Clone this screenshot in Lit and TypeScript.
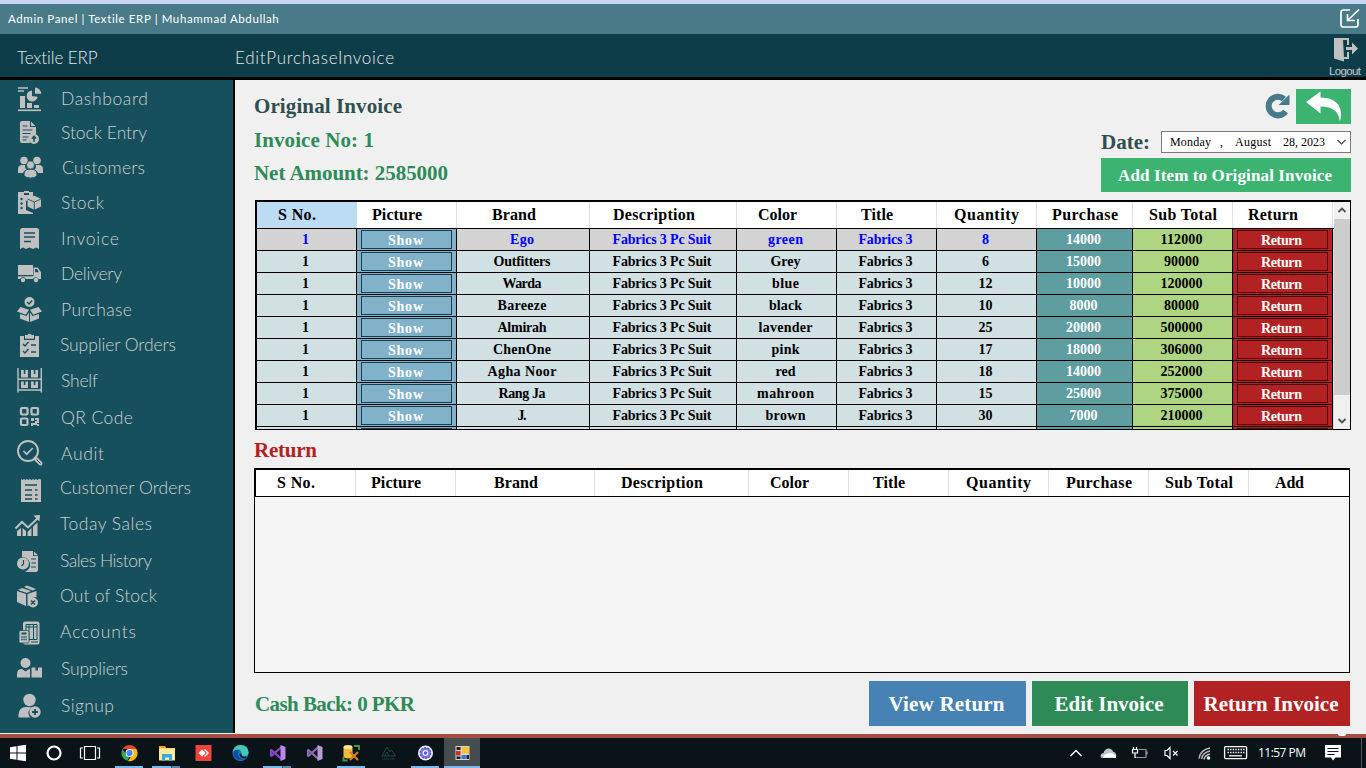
import { LitElement, html, svg, css } from "lit";
import { customElement, property } from "lit/decorators.js";

/** Text tracked out (or in) so that it fills a given width. */
@customElement("fit-text")
class FitText extends LitElement {
  @property({ type: Number }) w = 0;
  @property() text = "";
  static styles = css`
    :host { display: inline-block; white-space: pre; text-align: left; flex: none; }
  `;
  render() {
    return html`<span>${this.text}</span>`;
  }
  updated() {
    const span = this.renderRoot.querySelector("span") as HTMLElement;
    this.style.letterSpacing = "0px";
    const natural = span.getBoundingClientRect().width;
    const gaps = Math.max(1, this.text.length - 1);
    this.style.letterSpacing = this.text.length > 1 ? (this.w - natural) / gaps + "px" : "0px";
    this.style.width = this.w + "px";
  }
}

const fit = (text: string, w: number) => html`<fit-text .text=${text} .w=${w}></fit-text>`;

const B = "#17505d";

// Sidebar glyphs, each on a 30x30 board with its left edge 14px into the sidebar.
const glyph = {
  dashboard: svg`<path d="M4 4h10M4 7h6" stroke="#c0c0c0" stroke-width="1.3"/><path d="M4 26.3h23" stroke="#c0c0c0" stroke-width="1.6"/><path d="M6 12h5v12H6zM13 19h5v5h-5zM20 21h5v3h-5z"/><path d="M18 6.500a5.500 5.500 0 1 0 5.600 6.300L18 12z"/><path d="M21 3.600a6.200 6.200 0 0 1 6.200 6.200H21z"/>`,
  entry: svg`<path d="M8 3h8v6h6v9a5.500 5.500 0 0 0-6 7H8a2 2 0 0 1-2-2V5a2 2 0 0 1 2-2z"/><path d="M17 3.500L21.500 8H17z"/><path d="M8.500 8h5M8.500 12h10M8.500 15.500h8M8.500 19h6M8.500 22h4" stroke="${B}" stroke-width="1.200"/><circle cx="20" cy="21" r="5"/><path d="M20 24v-4.500M17.800 20.800l2.200-2.500 2.200 2.500" fill="none" stroke="${B}" stroke-width="1.500"/>`,
  customers: svg`<circle cx="10" cy="7.500" r="3.800"/><circle cx="23" cy="7.500" r="3.800"/><path d="M4 20v-3.500Q4 12 8 12h3q0 4 2 5-3 0-4 3zM29 20v-3.500Q29 12 25 12h-3q0 4-2 5 3 0 4 3z"/><circle cx="16.500" cy="12" r="3.900" stroke="${B}" stroke-width=".6"/><path d="M10 22.500Q10 16.500 14 16.500h5q4 0 4 6-2 2.500-6.500 2.500t-6.500-2.500z" stroke="${B}" stroke-width=".8"/>`,
  stock: svg`<path d="M4 4h6v3h5V4h4v6l-7 3v9l7 3v1H4z"/><path d="M10 3h5v2h-5z"/><g fill="${B}"><circle cx="7.500" cy="11" r="1.200"/><circle cx="7.500" cy="15.500" r="1.200"/><circle cx="7.500" cy="20" r="1.200"/></g><path d="M20.300 7.800l6.700 3v7.800l-6.700 3.200-6.700-3.200v-7.800z"/><path d="M13.500 11l6.800 3 6.800-3M20.300 14v8" fill="none" stroke="${B}" stroke-width=".9"/>`,
  invoice: svg`<path d="M8.500 4h14Q25 4 25 6.500V25l-2.800-1.600L19 25l-3.500-1.600L12 25l-3-1.600L6 25V6.500Q6 4 8.500 4z"/><path d="M10 9h11M10 13h11M10 17.500h7" stroke="${B}" stroke-width="1.700"/>`,
  delivery: svg`<path d="M4 6h15v10H4zM4 17h15.500V8.500h4.200l3.300 4.700V20h-2.500a3 3 0 0 0-5.500 0h-7.200a3 3 0 0 0-5.600 0H4z"/><path d="M21 10h2l2 3.200h-4z" fill="${B}"/><path d="M4 16.800h15" stroke="${B}" stroke-width=".8"/><circle cx="9" cy="21" r="2.200"/><circle cx="22" cy="21" r="2.200"/>`,
  purchase: svg`<circle cx="15.500" cy="7" r="5"/><path d="M13 7l2 2 3.200-3.500" fill="none" stroke="${B}" stroke-width="1.400"/><path d="M6.500 12l8.500 2.700-3.200 5L3 16.500zM24.500 12L16 14.700l3.200 5 8.800-3.200z"/><path d="M6 19l6.500 2 2.500-3.500V27l-9-3.500zM25 19l-6.500 2-2.500-3.500V27l9-3.500z"/>`,
  orders: svg`<path d="M6 6h4v4h11V6h4v21H6z"/><path d="M11 5h2.500a2.200 2.200 0 0 1 4 0H20v3.800h-9z"/><path d="M9 14l2 2 3.500-4M9 21l2 2 3.500-4M17 15h5M17 22h5" fill="none" stroke="${B}" stroke-width="1.400"/>`,
  shelf: svg`<path d="M4 2v24.500M27.300 2v24.500M3.500 13.200h24M3.500 24h24" stroke="#c0c0c0" stroke-width="1.400"/><path d="M7 4h2.800v4h1.600V4H14v7.500H7zM17 4h2.800v4h1.600V4H24v7.500h-7zM7 15.500h2.800v3.500h1.600v-3.500H14v6.500H7zM17 15.500h2.800v3.500h1.600v-3.500H24v6.500h-7z"/>`,
  qr: svg`<g fill="none" stroke="#c0c0c0" stroke-width="2.200"><rect x="7" y="5" width="6.500" height="6.500" rx="1"/><rect x="17.500" y="5" width="6.500" height="6.500" rx="1"/><rect x="7" y="15.500" width="6.500" height="6.500" rx="1"/></g><path d="M17 15h3v3h-3zM21 15h4v5h-2v-3h-2zM17 20h4v-2h2v4h-4v1h-2zM23 21h2v2h-2z"/>`,
  audit: svg`<circle cx="14" cy="12" r="10" fill="none" stroke="#c0c0c0" stroke-width="1.900"/><path d="M9.500 12l3.200 3.200 6-6.200" fill="none" stroke="#c0c0c0" stroke-width="1.700"/><path d="M21.500 19.500l5 5" stroke="#c0c0c0" stroke-width="4" stroke-linecap="round"/><path d="M22.500 20.500l4 4" stroke="${B}" stroke-width="1"/>`,
  custorders: svg`<path d="M7 6l1.500 1L10 6l1.500 1L13 6l1.500 1L16 6l1.500 1L19 6l1.500 1L22 6l1.500 1L25 6l2 .5V29H7z"/><path d="M11 12h12M11 17h7M11 22h7M11 26h7M21 17h2.500M21 22h2.500M21 26h2.500" stroke="${B}" stroke-width="1.500"/>`,
  sales: svg`<path d="M3 27v-5l4-3v8zM8.500 27v-8l3.500 3v5zM13.500 27v-4l4-4v8zM19 27V17.500l4.500-4V27z"/><path d="M1.500 19.500L8 13l6 5.500L24 9" fill="none" stroke="#c0c0c0" stroke-width="2"/><path d="M19.500 6.500L26 6l-.5 6.500z"/>`,
  history: svg`<path d="M8 5h11v5h5v14q0 2-2 2H11q6-3 5-9-2-6-8-6z"/><path d="M20 5.500l4 3.800h-4z"/><circle cx="9" cy="17.500" r="6"/><path d="M9.500 14v4l-2 2M17 13h5M17.500 17h4.500M17 21h5" fill="none" stroke="${B}" stroke-width="1.200"/>`,
  out: svg`<path d="M3 10l9 3v12l-9-4zM13.500 13l9-3v6q-7 0-6.500 8l-2.500 1zM4 9l4-2 9 3-4 2zM10 6l3-1.500 9 3.500-3.500 1.500z"/><circle cx="19" cy="21.500" r="5"/><path d="M17 19.500l4 4m0-4l-4 4" stroke="${B}" stroke-width="1.400"/>`,
  accounts: svg`<rect x="9" y="4.500" width="16.500" height="23" rx="2"/><path d="M12 7.500h11v15H12zM15 7.500v15M19.500 7.500v15M12 10h11M17 25h7" fill="none" stroke="${B}" stroke-width="1"/><rect x="5" y="13.500" width="10" height="12.500" rx="1.500" stroke="${B}" stroke-width=".8"/><path d="M7.500 16.500h5" stroke="${B}" stroke-width="2"/><path d="M7.300 20h5.500M7.300 22.500h5.500" stroke="${B}" stroke-width="1.400" stroke-dasharray="1.400 .7"/>`,
  suppliers: svg`<circle cx="11.500" cy="9" r="5"/><path d="M3 23.500v-3.500Q3 15 8 15l3.500 2.500L15 15l1 .3v8.200zM17.500 13.500h4v3.500l1.300-1 1.200 1v-3.500h4v10H17.500z"/>`,
  signup: svg`<circle cx="15.500" cy="9" r="6.200"/><path d="M4.500 26.500v-3Q5 16.500 11 16l7 .2Q12 20 16 26.500z"/><circle cx="21" cy="21" r="5.700"/><path d="M21 18v6M18 21h6" stroke="${B}" stroke-width="1.800"/>`,
};

// label, x offset, width, vertical centre, glyph
const NAV: [string, number, number, number, unknown][] = [
  ["Dashboard", 61, 87, 99, glyph.dashboard],
  ["Stock Entry", 61, 86, 133, glyph.entry],
  ["Customers", 62, 83, 168, glyph.customers],
  ["Stock", 61, 43, 203, glyph.stock],
  ["Invoice", 61, 58, 239, glyph.invoice],
  ["Delivery", 61, 61, 274, glyph.delivery],
  ["Purchase", 61, 71, 310, glyph.purchase],
  ["Supplier Orders", 60, 116, 345, glyph.orders],
  ["Shelf", 61, 37, 381, glyph.shelf],
  ["QR Code", 61, 72, 418, glyph.qr],
  ["Audit", 61, 43, 454, glyph.audit],
  ["Customer Orders", 60, 131, 488, glyph.custorders],
  ["Today Sales", 60, 92, 524, glyph.sales],
  ["Sales History", 60, 92, 561, glyph.history],
  ["Out of Stock", 60, 97, 596, glyph.out],
  ["Accounts", 60, 76, 632, glyph.accounts],
  ["Suppliers", 61, 67, 669, glyph.suppliers],
  ["Signup", 61, 53, 706, glyph.signup],
];

// Header cells: label, text width, space before the text
const HEAD1: [string, number, number][] = [
  ["S No.", 38, 21], ["Picture", 50, 15], ["Brand", 44, 35], ["Description", 82, 23], ["Color", 39, 21],
  ["Title", 32, 24], ["Quantity", 65, 17], ["Purchase", 66, 15], ["Sub Total", 68, 16], ["Return", 50, 15],
];
const HEAD2: [string, number, number][] = [
  ["S No.", 38, 21], ["Picture", 50, 15], ["Brand", 44, 38], ["Description", 82, 26], ["Color", 39, 21],
  ["Title", 32, 24], ["Quantity", 65, 17], ["Purchase", 66, 17], ["Sub Total", 68, 16], ["Add", 29, 26],
];

// brand, brand width, colour, colour width, quantity, purchase price, sub total
const ROWS: [string, number, string, number, string, string, string][] = [
  ["Ego", 24, "green", 35, "8", "14000", "112000"],
  ["Outfitters", 57, "Grey", 30, "6", "15000", "90000"],
  ["Warda", 39, "blue", 27, "12", "10000", "120000"],
  ["Bareeze", 49, "black", 33, "10", "8000", "80000"],
  ["Almirah", 49, "lavender", 54, "25", "20000", "500000"],
  ["ChenOne", 58, "pink", 28, "17", "18000", "306000"],
  ["Agha Noor", 69, "red", 20, "18", "14000", "252000"],
  ["Rang Ja", 47, "mahroon", 57, "15", "25000", "375000"],
  ["J.", 9, "brown", 40, "30", "7000", "210000"],
  ["", 0, "", 0, "", "", ""],
];

const vs = (a: string, b: string) => svg`<path d="M12 11.500v7M11.800 11.700L22.500 21M11.800 18.300L22.500 9" fill="none" stroke="${a}" stroke-width="2.200" stroke-linejoin="round"/><path d="M21.500 7l5 2v12l-5 2z" fill="${b}"/>`;

const TASKS: { art: unknown; bar?: string }[] = [
  { art: svg`<path d="M11.600 11A8 8 0 0 1 25.400 11H18z" fill="#ea4335"/><path d="M11.600 11L15.300 17l3 2-2 3.800A8 8 0 0 1 11.600 11z" fill="#34a853"/><path d="M18.500 11h6.900a8 8 0 0 1-8.400 12l4-6z" fill="#fbbc05"/><circle cx="18.500" cy="15" r="4" fill="#fff"/><circle cx="18.500" cy="15" r="3.100" fill="#4285f4"/>`, bar: "full" },
  { art: svg`<path d="M11 8h6l1 2h9v12.500H11z" fill="#ffd766"/><path d="M11 8h6v2h-6z" fill="#e8a726"/><path d="M11 11h16v11H11z" fill="#ffe9a0"/><path d="M14 23v-7h10v7h-3v-3.500h-4V23z" fill="#3da7e0"/>`, bar: "split" },
  { art: svg`<path d="M10.500 7h16v16h-16z" fill="#ef443b"/><path d="M13.500 15l3.500-3.500 3.500 3.500-3.500 3.500z" fill="#fff"/><path d="M19.500 11.500l3.500 3.500-3.500 3.500" fill="none" stroke="#fff" stroke-width="1.400"/>` },
  { art: svg`<circle cx="18.500" cy="15" r="8" fill="#1777c8"/><path d="M10.700 14Q12 7 18.500 7q8 0 8 7.500 0 3.500-4 3.500-3.500 0-3-2.500 0-4-4-4-3 0-4.800 2.500z" fill="#41cbb0"/><path d="M13 12q-4 5 1 8.500 3 2.500 8 1-6-1-6-6 0-2 1.500-3.500z" fill="#0c4fa0"/><path d="M19.500 15.500q-.5 4 5.500 3l-1.500 2q-6 0-6-4.500z" fill="#0b1a22"/>` },
  { art: vs("#8447c4", "#b98ae8"), bar: "split" },
  { art: vs("#8b6bb0", "#b79ad6") },
  { art: svg`<path d="M10.500 9v10q4.500 3 9 0V9z" fill="#f5b93e"/><ellipse cx="15" cy="9" rx="4.500" ry="2" fill="#ffe39a"/><path d="M21 8h5v4M10.500 19v3.500h4" fill="none" stroke="#42a043" stroke-width="1.800"/><path d="M17 14l8 8M25 14l-8 8" stroke="#d97a20" stroke-width="2.200"/>`, bar: "full" },
  { art: svg`<path d="M12 18l5-9 3 5 1.500-2 4 6zM14.500 18l2.500-4 2 4" fill="none" stroke="#1c4a3c" stroke-width="1"/><path d="M12 21h13" stroke="#26342f" stroke-width="1.500" stroke-dasharray="1.500 .5"/>` },
  { art: svg`<circle cx="18.500" cy="15" r="7.500" fill="#f2f1ff"/><circle cx="18.500" cy="15" r="4.200" fill="none" stroke="#7774ea" stroke-width="2.600"/><circle cx="18.500" cy="15" r="5.200" fill="none" stroke="#5b57e0" stroke-width="1.500" stroke-dasharray="2 1.200"/><circle cx="18.500" cy="15" r="1.700" fill="#5b57e0"/>`, bar: "full" },
  { art: svg`<path d="M11.500 8h14v14h-14z" fill="#d5d5d5"/><path d="M12.500 9h4v3h-4zM12.500 18.500h4v2.500h-4zM22.500 17h2.500v4h-2.500z" fill="#222"/><path d="M18 9h7v6.500h-7z" fill="#f4c430"/><path d="M12 13h4.500v4.500H12z" fill="#d12b1c"/><path d="M17.500 17h4.500v4h-4.500z" fill="#2f7be0"/>`, bar: "wide" },
];

const TRAY = [
  svg`<path d="M10.500 18l5.500-5.500 5.500 5.500" fill="none" stroke="#fff" stroke-width="1.300"/>`,
  svg`<path d="M9 19.800q-1.500-4 2.500-4.800Q13 10 17.500 10.500q3 .5 4 3.500 3.500.5 2.500 5.800z" fill="#bfc4c6"/><path d="M11 19.800q0-3 4-4 5-2 6.500.5 3 .5 2.500 3.500z" fill="#fff"/>`,
  svg`<path d="M8.500 11.500h5v3.500h-5zM9.500 9v2.500M12.500 9v2.500M11 15v4.500h1.500" fill="none" stroke="#fff" stroke-width="1.200"/><path d="M14.500 11.500h7.500v8h-9M23 13.500v3" fill="none" stroke="#999" stroke-width="1.200"/>`,
  svg`<path d="M9 12.500h2l3-3v11l-3-3H9z" fill="none" stroke="#fff" stroke-width="1.200"/><path d="M17 13l4.500 4.500m0-4.500L17 17.500" stroke="#fff" stroke-width="1.200"/>`,
  svg`<path d="M11 20.500Q12 12 22 10M13.500 21q1-6.500 8.500-8M16 21.500q1-4.500 6-5.500" fill="none" stroke="#bbb" stroke-width="1.500"/><circle cx="20.500" cy="20" r="1.800" fill="#fff"/>`,
  svg`<rect x="4.600" y="8.600" width="22" height="12" rx="1" fill="none" stroke="#fff" stroke-width="1.300"/><path d="M7.500 11.500h17M7.500 14.500h17" stroke="#fff" stroke-width="1.400" stroke-dasharray="1.400 1.200"/><path d="M9 17.800h13" stroke="#fff" stroke-width="1.300"/>`,
];

@customElement("app-root")
class AppRoot extends LitElement {
  static styles = css`
    :host { display: flex; flex-direction: column; width: 1366px; height: 768px; overflow: hidden; background: #f0f0f0; font-family: "Liberation Serif", serif; }
    * { box-sizing: border-box; }
    svg { display: block; flex: none; }
    .edge { height: 4px; background: #c9d4f1; flex: none; }
    .title { height: 30px; flex: none; background: #487a88; color: #fff; font: 400 11.5px "Lato", sans-serif; display: flex; align-items: center; justify-content: space-between; padding: 0 6px 0 8px; }
    .title fit-text { padding-bottom: 1px; }
    .bar { height: 46px; flex: none; background: #0d3d48; border-bottom: 3px solid #000; color: #e6e9ea; font: 300 17px/20px "Lato", sans-serif; display: flex; }
    .brand { width: 218px; margin-left: 17px; padding-top: 14px; }
    .crumb { flex: 1; padding-top: 14px; }
    .logout { width: 38px; padding-top: 3px; display: flex; flex-direction: column; align-items: center; font: 11.500px/16px "Liberation Sans", sans-serif; color: #c8c8c8; padding-right: 4px; }
    .body { height: 653px; flex: none; display: flex; }
    .side { width: 235px; flex: none; background: #17505d; border-right: 2px solid #000; }
    .nav { display: flex; align-items: flex-end; padding-left: 14px; font: 300 17.500px/30px "Lato", sans-serif; color: #ccd1d1; }
    .nav svg { fill: #c0c0c0; }
    .main { flex: 1; padding: 0 15px 0 19px; display: flex; flex-direction: column; color: #000; font-weight: bold; }
    .top { height: 120px; display: flex; justify-content: space-between; }
    .facts { padding-top: 10px; font-size: 21px; line-height: 33.500px; color: #2e8b57; }
    .facts .dark { color: #2f4f4f; }
    .facts div { height: 33.500px; }
    .tools { width: 250px; display: flex; flex-direction: column; padding-top: 9px; }
    .line1 { display: flex; justify-content: flex-end; gap: 5px; height: 35px; }
    .line1 > :first-child { margin-top: 4px; }
    .back { width: 55px; height: 35px; background: #3cb371; }
    .line2 { display: flex; justify-content: space-between; align-items: center; margin-top: 7px; height: 22px; font-size: 21px; color: #2f4f4f; }
    .picker { width: 190px; height: 22px; border: 1px solid #7a7a7a; background: #fff; color: #000; font-size: 12px; font-weight: normal; display: flex; align-items: center; padding-left: 8px; }
    .g1 { margin-left: 9px; } .g2 { margin-left: 12px; } .g3 { margin-left: 12px; } .g4 { margin-left: 11px; }
    .add { margin-top: 5px; height: 34px; background: #3cb371; color: #fff; font-size: 17px; display: flex; align-items: center; justify-content: center; padding: 2px 2px 0 0; }
    .grid1 { margin-left: 1px; width: 1096px; height: 230px; flex: none; border: 1px solid #000; border-width: 2px 1px 1px 2px; display: flex; overflow: hidden; background: #fff; }
    .rows { width: 1077px; overflow: hidden; }
    .cols { display: grid; grid-template-columns: 100px 100px 133px 147px 100px 100px 100px 96px 100px 100px; }
    .cols2 { display: grid; grid-template-columns: 100px 100px 139px 154px 100px 100px 100px 100px 100px 1fr; }
    .head { height: 27px; border-bottom: 1px solid #000; font-size: 16px; line-height: 26px; background: #fff; }
    .head > div { border-right: 1px solid #e0e0e0; display: flex; }
    .cols.head > :first-child { background: #bbdcf3; border-color: #bbdcf3; }
    .cols2.head > :last-child { border: 0; }
    .row { height: 22px; font-size: 14px; line-height: 22px; background: #d1e0e3; }
    .row > div { height: 22px; border-right: 1px solid #000; border-bottom: 1px solid #000; display: flex; justify-content: center; padding-right: 2px; overflow: hidden; }
    .row.sel { background: #d3d3d3; color: #00f; }
    .row > .show { background: #82b1ca; color: #fff; padding: 1px 4px 1px 4px; }
    .row > .ret { background: #b22222; color: #fff; padding: 1px 4px 1px 4px; }
    .btn { flex: 1; height: 19px; border: 1px solid #173f50; line-height: 20px; display: flex; justify-content: center; padding-right: 2px; }
    .ret .btn { border-color: #4f0707; }
    .row > .price { background: #5f9ea0; color: #fff; }
    .row > .sub { background: #aed581; color: #000; }
    .scroll { width: 16px; background: #f0f0f0; display: flex; flex-direction: column; }
    .thumb { height: 176px; background: #cdcdcd; }
    .cap { height: 38px; padding-top: 6px; font-size: 21px; line-height: 28px; color: #b22222; }
    .grid2 { width: 1096px; height: 205px; flex: none; border: 1px solid #000; border-top-width: 2px; background: #f5f5f5; }
    .grid2 .head { border-left: 1px solid #000; }
    .foot { display: flex; gap: 6px; padding-top: 8px; width: 1096px; font-size: 21px; color: #fff; }
    .cash { flex: 1; color: #2e8b57; padding-left: 1px; line-height: 46px; }
    .act { width: 156px; height: 45px; display: flex; align-items: center; justify-content: center; padding: 2px 2px 0 0; }
    .blue { width: 157px; background: #4682b4; } .green { background: #2e8b57; } .red { background: #b22222; }
    .strip { height: 5px; flex: none; background: #a54d43; border-top: 1px solid #eee; display: flex; justify-content: flex-end; }
    .blob { width: 8px; height: 2px; margin-right: 20px; background: #fff; border-radius: 0 0 4px 4px; }
    .task { height: 30px; flex: none; background: #0a1418; display: flex; color: #fff; }
    .sys { width: 36px; }
    .app { width: 37px; height: 30px; position: relative; }
    .apps { display: flex; margin-left: 3px; flex: 1; }
    .full::after, .split::after, .wide::after { content: ""; position: absolute; bottom: 0; height: 2px; left: 4px; width: 28px; background: #76b9ed; }
    .split::after { background: linear-gradient(90deg, #76b9ed 19px, #2e526a 19px, #2e526a 20px, #5789ae 20px); }
    .app.wide { width: 36px; background: #474c4f; overflow: hidden; }
    .wide::after { left: 0; width: 36px; }
    .tray { display: flex; width: 306px; font: 12px/30px "Open Sans", sans-serif; }
    .clock { margin-left: 6px; width: 59px; }
  `;

  head(cells: [string, number, number][], cls: string) {
    return html`<div class="${cls} head">${cells.map(([t, w, o]) => html`<div>
      <svg width=${o} height="1"></svg>${fit(t, w)}</div>`)}</div>`;
  }

  row(r: (typeof ROWS)[number], i: number) {
    const [brand, bw, color, cw, qty, price, sub] = r;
    const full = brand !== "";
    const num = (s: string) => fit(s, s.length * 7);
    return html`<div class="cols row ${i === 0 ? "sel" : ""}">
      <div>${full ? fit("1", 7) : ""}</div>
      <div class="show"><div class="btn">${full ? fit("Show", 35) : ""}</div></div>
      <div>${full ? fit(brand, bw) : ""}</div>
      <div>${full ? fit("Fabrics 3 Pc Suit", 99) : ""}</div>
      <div>${full ? fit(color, cw) : ""}</div>
      <div>${full ? fit("Fabrics 3", 54) : ""}</div>
      <div>${num(qty)}</div>
      <div class="price">${num(price)}</div>
      <div class="sub">${num(sub)}</div>
      <div class="ret"><div class="btn">${full ? fit("Return", 41) : ""}</div></div>
    </div>`;
  }

  render() {
    return html`
      <div class="edge"></div>
      <div class="title">
        ${fit("Admin Panel | Textile ERP | Muhammad Abdullah", 271)}
        <svg width="22" height="22" fill="none" stroke="#fff" stroke-width="1.700"><path d="M12 2H5.500Q3 2 3 4.500v12Q3 19 5.500 19h12Q20 19 20 16.500V11M21 1.500L10 12M9.500 6v6.500H17"/></svg>
      </div>
      <div class="bar">
        <div class="brand">${fit("Textile ERP", 81)}</div>
        <div class="crumb">${fit("EditPurchaseInvoice", 159)}</div>
        <div class="logout">
          <svg width="26" height="26"><path d="M2 1h12v2l-3-.5L12 21v3.500L2 21.500z" fill="#c0c0c0"/><path d="M9 2h7v6M16 15v6h-4" fill="none" stroke="#c0c0c0" stroke-width="2"/><path d="M14 10h6V5.500l6 6-6 6V13h-6z" fill="#c0c0c0"/></svg>
          ${fit("Logout", 32)}
        </div>
      </div>
      <div class="body">
        <div class="side">
          ${NAV.map(([t, x, w, y, art], i) => html`<div class="nav" style="height:${i ? y - NAV[i - 1][3] : 34}px">
            <svg width=${x - 14} height="30">${art}</svg>${fit(t, w)}</div>`)}
        </div>
        <div class="main">
          <div class="top">
            <div class="facts">
              <div class="dark">${fit("Original Invoice", 148)}</div>
              <div>${fit("Invoice No: 1", 120)}</div>
              <div>${fit("Net Amount: 2585000", 194)}</div>
            </div>
            <div class="tools">
              <div class="line1">
                <svg width="26" height="28"><path d="M20.500 18.500A9.300 9.300 0 1 1 19 6" fill="none" stroke="#487a8b" stroke-width="6"/><path d="M24.500 1.500V12H13.500z" fill="#487a8b"/></svg>
                <div class="back"><svg width="55" height="35"><path d="M10 13L24.500 2.500V8.500Q45 9 45 26q0 4-1.500 6-1-14.500-19-14.500v7z" fill="#fff"/></svg></div>
              </div>
              <div class="line2">
                ${fit("Date:", 49)}
                <div class="picker">${fit("Monday", 41)}<span class="g1">${fit(",", 3)}</span><span class="g2">${fit("August", 36)}</span><span class="g3">${fit("28, 2023", 42)}</span>
                  <svg class="g4" width="12" height="10"><path d="M1.500 3l4 4 4-4" fill="none" stroke="#444" stroke-width="1.200"/></svg>
                </div>
              </div>
              <div class="add">${fit("Add Item to Original Invoice", 214)}</div>
            </div>
          </div>
          <div class="grid1">
            <div class="rows">${this.head(HEAD1, "cols")}${ROWS.map((r, i) => this.row(r, i))}</div>
            <div class="scroll">
              <svg width="16" height="17"><path d="M4.500 10L8 6.500l3.500 3.500" fill="none" stroke="#505050" stroke-width="1.800"/></svg>
              <div class="thumb"></div>
              <svg width="16" height="34"><path d="M4.500 24L8 27.500l3.500-3.500" fill="none" stroke="#505050" stroke-width="1.800"/></svg>
            </div>
          </div>
          <div class="cap">${fit("Return", 63)}</div>
          <div class="grid2">${this.head(HEAD2, "cols2")}</div>
          <div class="foot">
            <div class="cash">${fit("Cash Back: 0 PKR", 160)}</div>
            <div class="act blue">${fit("View Return", 116)}</div>
            <div class="act green">${fit("Edit Invoice", 109)}</div>
            <div class="act red">${fit("Return Invoice", 135)}</div>
          </div>
        </div>
      </div>
      <div class="strip"><div class="blob"></div></div>
      <div class="task">
        <svg class="sys" width="36" height="30"><path d="M10 9.200l6.500-1v6.300H10zM17.500 8l8.500-1.200v7.700h-8.500zM10 15.500h6.500v6.300l-6.500-1zM17.500 15.500H26v7.700L17.500 22z" fill="#fff"/></svg>
        <svg class="sys" width="36" height="30"><circle cx="18" cy="15" r="6.500" fill="none" stroke="#fff" stroke-width="2.200"/></svg>
        <svg class="sys" width="36" height="30"><path d="M12.500 8.500h11v13h-11zM11 10H8.500v10H11M25 10h2.500v10H25" fill="none" stroke="#fff" stroke-width="1.200"/></svg>
        <div class="apps">${TASKS.map((t) => html`<div class="app ${t.bar ?? ""}"><svg width="37" height="30">${t.art}</svg></div>`)}</div>
        <div class="tray">
          ${TRAY.map((a) => html`<svg width="32" height="30">${a}</svg>`)}
          <div class="clock">${fit("11:57 PM", 48)}</div>
          <svg width="49" height="30"><path d="M8 7h16v12.500h-5.500L16 22.500l-2-3H8z" fill="#fff"/><path d="M10.500 10.500h11M10.500 13.500h11M10.500 16.500h7" stroke="#0a1418" stroke-width="1.200"/><path d="M44.500 0v30" stroke="#555"/></svg>
        </div>
      </div>`;
  }
}
